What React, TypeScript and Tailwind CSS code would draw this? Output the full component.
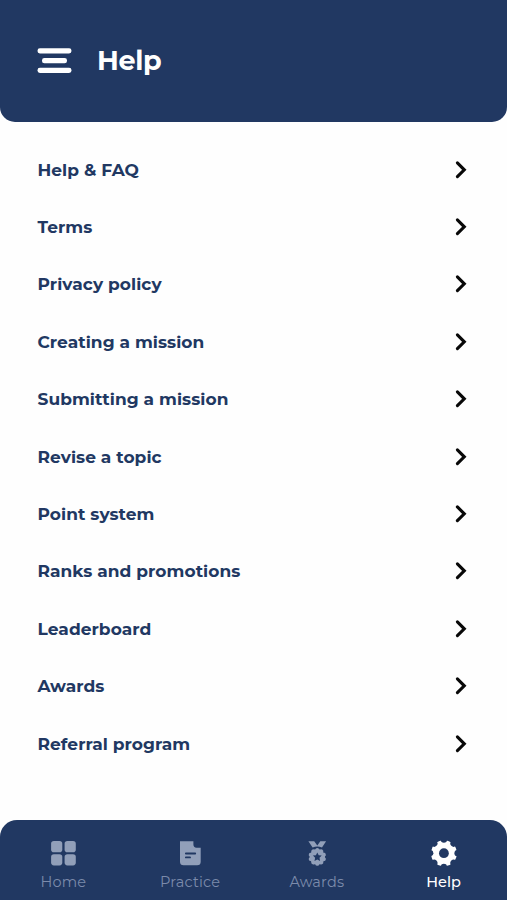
import type { ReactNode } from "react";

const items = [
  "Help & FAQ",
  "Terms",
  "Privacy policy",
  "Creating a mission",
  "Submitting a mission",
  "Revise a topic",
  "Point system",
  "Ranks and promotions",
  "Leaderboard",
  "Awards",
  "Referral program",
];

const gearNotches = [0, 45, 90, 135, 180, 225, 270, 315];
const medalBumps = [0, 36, 72, 108, 144, 180, 216, 252, 288, 324];

function MenuIcon() {
  return (
    <svg width="35" height="26" viewBox="0 0 35 26" fill="currentColor" aria-hidden="true">
      <rect x="0.5" y="0.3" width="34" height="5.2" rx="2.4" />
      <rect x="5" y="10.1" width="25" height="5.2" rx="2.4" />
      <rect x="0.5" y="19.8" width="34" height="5.2" rx="2.4" />
    </svg>
  );
}

function Chevron() {
  return (
    <svg
      width="12"
      height="20"
      viewBox="0 0 12 20"
      fill="none"
      stroke="#080808"
      strokeWidth="3.1"
      strokeLinecap="round"
      aria-hidden="true"
    >
      <path d="M2.4 2.9 9.3 9.8 2.4 16.7" />
    </svg>
  );
}

function HomeIcon() {
  return (
    <svg width="26" height="26" viewBox="0 0 26 26" fill="currentColor" aria-hidden="true">
      <rect x="1.1" y="1" width="11.2" height="11.2" rx="2.8" />
      <rect x="14.6" y="1" width="11.2" height="11.2" rx="2.8" />
      <rect x="1.1" y="14.2" width="11.2" height="11.2" rx="2.8" />
      <rect x="14.6" y="14.2" width="11.2" height="11.2" rx="2.8" />
    </svg>
  );
}

function PracticeIcon() {
  return (
    <svg width="26" height="26" viewBox="0 0 26 26" fill="currentColor" aria-hidden="true">
      <path d="M3 1.2H16.4V4.6Q16.4 7.7 19.5 7.7H23.7V21.7Q23.7 25.3 20.1 25.3H6.6Q3 25.3 3 21.7Z" />
      <path d="M8.9 13.5H18.2M8.9 17.4H13" stroke="#213862" strokeWidth="1.9" strokeLinecap="round" />
    </svg>
  );
}

function AwardsIcon() {
  return (
    <svg width="26" height="26" viewBox="0 0 26 26" fill="currentColor" aria-hidden="true">
      <path d="M4.4 1.2H10.2L13.3 5.4 16.3 1.2H22.1L18 7.5Q13.3 5.4 8.6 7.5Z" />
      <circle cx="13.3" cy="16.9" r="7.8" />
      {medalBumps.map((a) => (
        <circle key={a} cx="13.3" cy="9.9" r="1.9" transform={`rotate(${a} 13.3 16.9)`} />
      ))}
      <path
        d="M13.3 12.4 14.7 15.3 17.7 15.6 15.5 17.8 16.1 20.9 13.3 19.4 10.5 20.9 11.1 17.8 8.9 15.6 11.9 15.3Z"
        fill="#213862"
      />
    </svg>
  );
}

function HelpIcon() {
  return (
    <svg width="26" height="26" viewBox="0 0 26 26" aria-hidden="true">
      <mask id="gear">
        <circle cx="12.9" cy="13.2" r="13" fill="white" />
        <circle cx="12.9" cy="13.2" r="4.9" fill="black" />
        {gearNotches.map((a) => (
          <circle key={a} cx="12.9" cy="-0.5" r="3.2" fill="black" transform={`rotate(${a} 12.9 13.2)`} />
        ))}
      </mask>
      <rect width="26" height="26" fill="currentColor" mask="url(#gear)" />
    </svg>
  );
}

const tabs: { label: string; icon: ReactNode; active?: boolean }[] = [
  { label: "Home", icon: <HomeIcon /> },
  { label: "Practice", icon: <PracticeIcon /> },
  { label: "Awards", icon: <AwardsIcon /> },
  { label: "Help", icon: <HelpIcon />, active: true },
];

export default function App() {
  return (
    <div className="flex h-[900px] w-full flex-col overflow-hidden bg-[#fefefe] font-['Montserrat','Inter',sans-serif]">
      <header className="flex h-[122px] shrink-0 items-center gap-[25px] rounded-b-[15px] bg-[#213862] pl-[37px] text-white">
        <button type="button" aria-label="Menu">
          <MenuIcon />
        </button>
        <h1 className="text-[27px] leading-8 font-bold tracking-[-0.3px]">Help</h1>
      </header>

      <main className="flex-1 pt-[19px]">
        <ul>
          {items.map((item) => (
            <li key={item} className="h-[57.4px]">
              <a href="#" className="flex h-full items-center justify-between pr-10 pl-[37.5px]">
                <span className="text-[17px] leading-6 font-bold tracking-[0.06px] text-[#213862]">
                  {item}
                </span>
                <Chevron />
              </a>
            </li>
          ))}
        </ul>
      </main>

      <nav className="grid h-20 shrink-0 grid-cols-4 rounded-t-[17px] bg-[#213862] pt-5">
        {tabs.map((tab) => (
          <a
            key={tab.label}
            href="#"
            aria-current={tab.active ? "page" : undefined}
            className={`flex flex-col items-center gap-[5.5px] ${tab.active ? "text-white" : "text-[#919fb9]"}`}
          >
            {tab.icon}
            <span
              className={`text-[14.5px] leading-5 ${tab.active ? "font-medium text-white" : "tracking-[0.2px] text-[#7c8bab]"}`}
            >
              {tab.label}
            </span>
          </a>
        ))}
      </nav>
    </div>
  );
}
